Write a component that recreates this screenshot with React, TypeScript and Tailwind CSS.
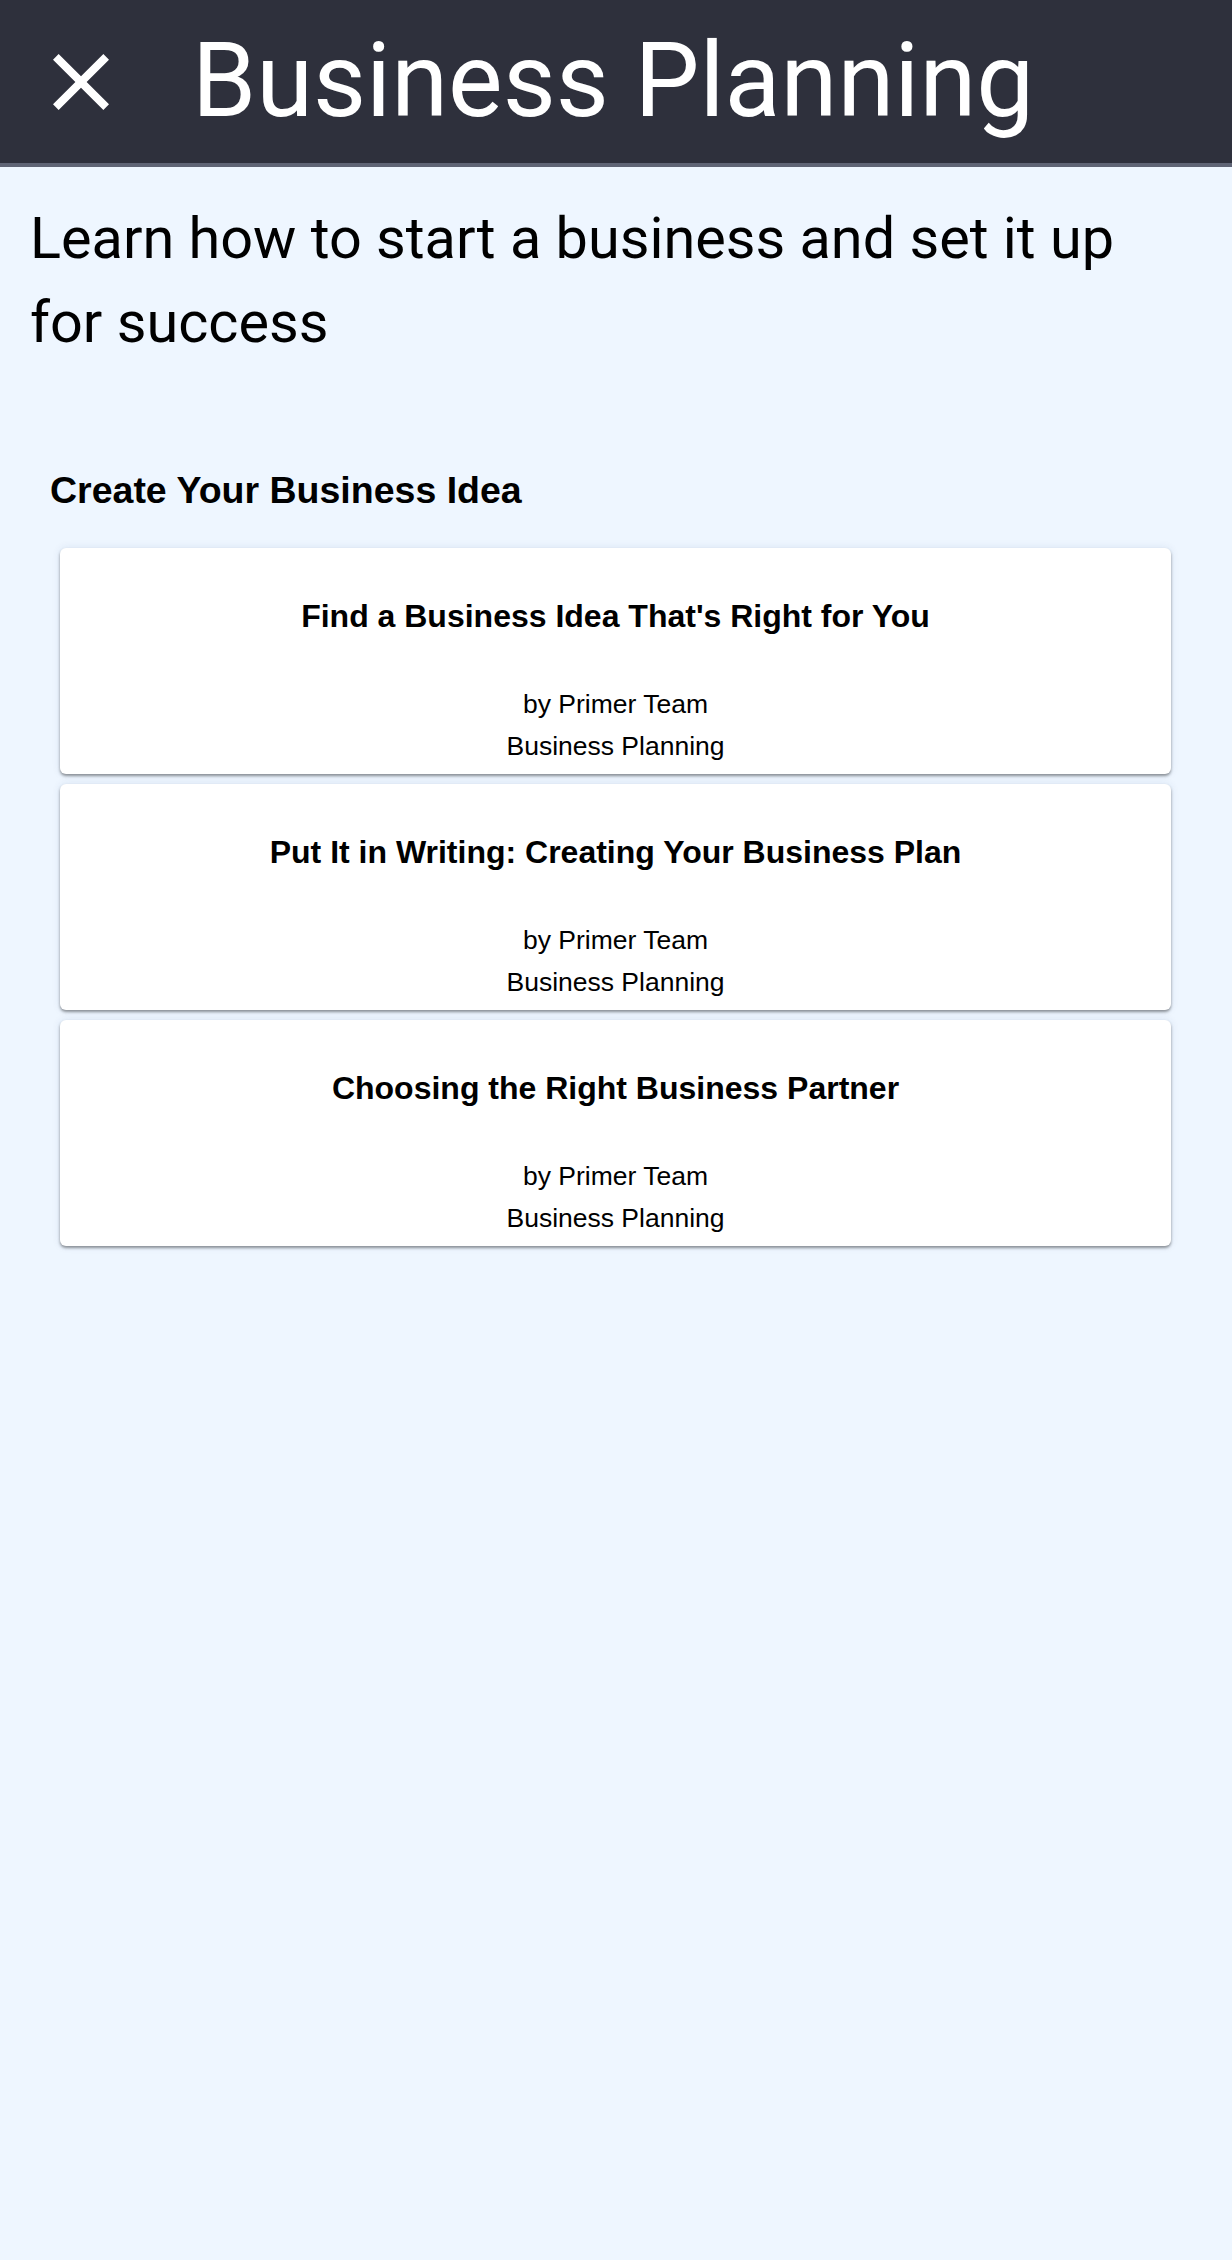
import React from "react";

const cards = [
  "Find a Business Idea That's Right for You",
  "Put It in Writing: Creating Your Business Plan",
  "Choosing the Right Business Partner",
];

export default function App() {
  return (
    <div className="min-h-[2260px] w-full bg-[#eef6ff]">
      <header className="flex h-[167px] items-center border-b-4 border-[#5f6475] bg-[#2e303c]">
        <div className="ml-[33px] flex h-[96px] w-[96px] items-center justify-center">
          <svg width="96" height="96" viewBox="0 0 24 24" fill="#ffffff">
            <path d="M19 6.41L17.59 5 12 10.59 6.41 5 5 6.41 10.59 12 5 17.59 6.41 19 12 13.41 17.59 19 19 17.59 13.41 12z" />
          </svg>
        </div>
        <h1 className="ml-[63px] font-['Roboto',sans-serif] text-[103px] font-normal text-white">
          Business Planning
        </h1>
      </header>

      <p className="mt-[30px] pl-[30px] pr-[60px] font-['Roboto',sans-serif] text-[57.6px] leading-[84px] text-black">
        Learn how to start a business and set it up for success
      </p>

      <section className="mt-[97px] px-[50px] font-['Liberation_Sans',Arial,sans-serif]">
        <h2 className="text-[37.5px] font-bold text-black">Create Your Business Idea</h2>
      </section>

      <div className="mt-[30px] flex flex-col gap-[10px] pl-[60px] pr-[61px] font-['Liberation_Sans',Arial,sans-serif]">
        {cards.map((t) => (
          <div
            key={t}
            className="flex h-[226px] flex-col items-center rounded-md bg-white pt-[50px] text-center text-black shadow-[0_2px_3px_rgba(0,0,0,0.4),0_0_8px_rgba(30,60,120,0.1)]"
          >
            <h3 className="text-[32px] font-bold leading-[37px]">{t}</h3>
            <div className="mt-[48px] text-[26.5px] leading-[42px]">by Primer Team</div>
            <div className="text-[26.5px] leading-[42px]">Business Planning</div>
          </div>
        ))}
      </div>
    </div>
  );
}
